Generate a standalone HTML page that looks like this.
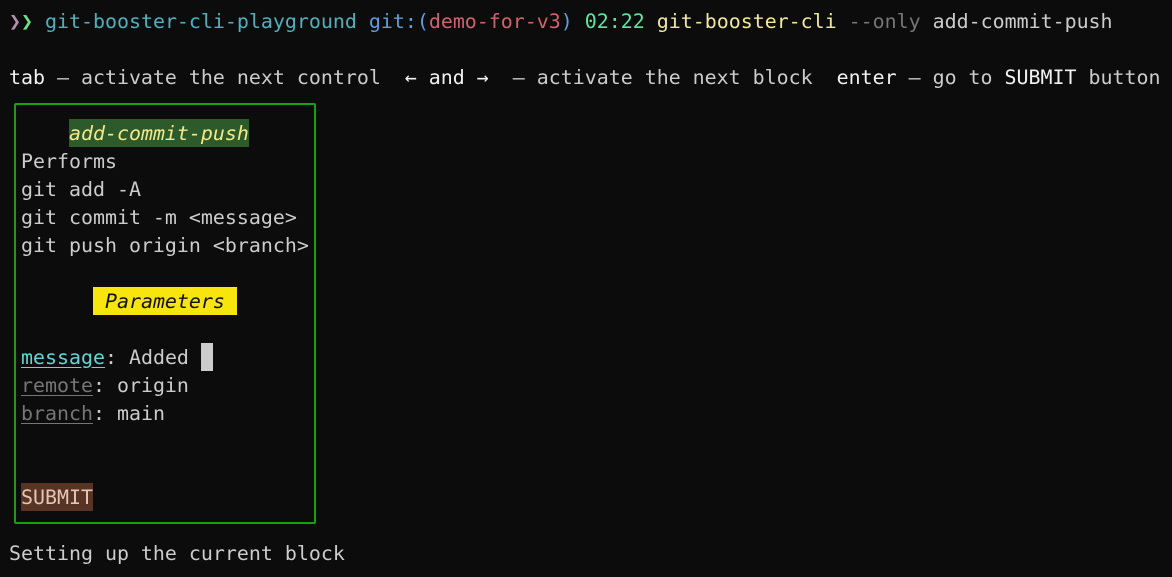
<!DOCTYPE html>
<html><head><meta charset="utf-8">
<style>
html,body{margin:0;padding:0;background:#0c0c0c;width:1172px;height:577px;overflow:hidden}
body{position:relative;font-family:"DejaVu Sans Mono","Liberation Mono",monospace;font-size:19.93px;color:#cccccc}
.r{position:absolute;left:9px;height:28px;line-height:28px;white-space:pre;margin-top:1px}
.w{color:#f2f2f2}
.u{text-decoration:underline;text-underline-offset:3px}
.hb{display:inline-block;height:28px;line-height:28px;vertical-align:top;margin-top:-1px;padding-top:1px;box-sizing:border-box}
.box{position:absolute;left:14px;top:103px;width:302px;height:421px;border:2px solid #16a00e;border-radius:2px;box-sizing:border-box}
</style></head><body>
<div class="r" style="top:7px"><span style="color:#b48ead">❯</span><span style="color:#6ee08a">❯</span> <span style="color:#4fb1c0">git-booster-cli-playground</span> <span style="color:#5a9fe0">git:(</span><span style="color:#d0636a">demo-for-v3</span><span style="color:#5a9fe0">)</span> <span style="color:#5ee6a0">02:22</span> <span style="color:#f3e89a">git-booster-cli</span> <span style="color:#767676">--only</span> <span>add-commit-push</span></div>
<div class="r" style="top:63px"><span class="w">tab</span> – activate the next control  <span class="w">← and →</span>  – activate the next block  <span class="w">enter</span> – go to <span class="w">SUBMIT</span> button</div>
<div class="box"></div>
<div class="r" style="top:119px">     <span class="hb" style="background:#2c5a2a;color:#f7e787;font-style:italic">add-commit-push</span></div>
<div class="r" style="top:147px"> Performs</div>
<div class="r" style="top:175px"> git add -A</div>
<div class="r" style="top:203px"> git commit -m &lt;message&gt;</div>
<div class="r" style="top:231px"> git push origin &lt;branch&gt;</div>
<div class="r" style="top:287px">       <span class="hb" style="background:#f9e50e;color:#111;font-style:italic"> Parameters </span></div>
<div class="r" style="top:343px"> <span class="u" style="color:#61d6d6">message</span>: Added <span class="hb" style="background:#cccccc"> </span></div>
<div class="r" style="top:371px"> <span class="u" style="color:#767676">remote</span>: origin</div>
<div class="r" style="top:399px"> <span class="u" style="color:#767676">branch</span>: main</div>
<div class="r" style="top:483px"> <span class="hb" style="background:#583424;color:#e6c4b6">SUBMIT</span></div>
<div class="r" style="top:539px">Setting up the current block</div>
</body></html>
